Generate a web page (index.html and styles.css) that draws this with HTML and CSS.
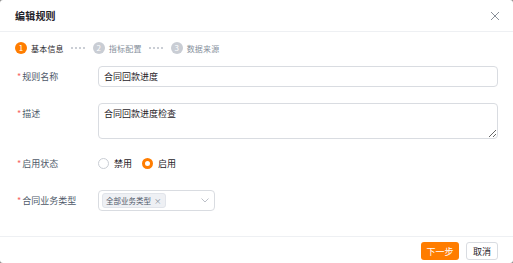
FILE: index.html
```html
<!DOCTYPE html>
<html lang="zh">
<head>
    <meta charset="UTF-8">
    <title>编辑规则</title>
    <link rel="stylesheet" href="styles.css">
</head>
<body>

<div class="dialog">
    <div class="dialog-header">
        <span class="dialog-title">编辑规则</span>
        <svg class="close-icon" width="10" height="10" viewBox="0 0 10 10">
            <path d="M1 1 L9 9 M9 1 L1 9" stroke="#8a9099" stroke-width="1" fill="none"/>
        </svg>
    </div>

    <div class="steps">
        <div class="step active"><span class="step-num">1</span><span class="step-text">基本信息</span></div>
        <span class="step-dots"></span>
        <div class="step"><span class="step-num">2</span><span class="step-text">指标配置</span></div>
        <span class="step-dots"></span>
        <div class="step"><span class="step-num">3</span><span class="step-text">数据来源</span></div>
    </div>

    <div class="form">
        <div class="form-row">
            <label class="form-label"><i>*</i>规则名称</label>
            <div class="form-control">
                <input type="text" class="text-input" value="合同回款进度">
            </div>
        </div>
        <div class="form-row tight">
            <label class="form-label"><i>*</i>描述</label>
            <div class="form-control">
                <textarea class="text-area">合同回款进度检查</textarea>
            </div>
        </div>
        <div class="form-row">
            <label class="form-label"><i>*</i>启用状态</label>
            <div class="form-control radios">
                <span class="radio"><span class="radio-dot"></span>禁用</span>
                <span class="radio checked"><span class="radio-dot"></span>启用</span>
            </div>
        </div>
        <div class="form-row">
            <label class="form-label"><i>*</i>合同业务类型</label>
            <div class="form-control">
                <div class="select-box">
                    <span class="tag">全部业务类型<span class="tag-close">×</span></span>
                    <svg class="chevron" width="8" height="5" viewBox="0 0 8 5">
                        <path d="M0.5 0.5 L4 4 L7.5 0.5" stroke="#b4b9c2" stroke-width="0.9" fill="none"/>
                    </svg>
                </div>
            </div>
        </div>
    </div>

    <div class="dialog-footer">
        <button class="btn btn-primary">下一步</button>
        <button class="btn">取消</button>
    </div>
</div>

</body>
</html>
```

FILE: styles.css
```css
* {
    box-sizing: border-box;
    margin: 0;
    padding: 0;
    font-family: "Noto Sans CJK SC", "Noto Sans", sans-serif;
}

body {
    background: #8c8c8c;
    width: 513px;
    height: 263px;
    overflow: hidden;
}

.dialog {
    background: #fff;
    width: 513px;
    height: 263px;
    border-radius: 3px;
    display: flex;
    flex-direction: column;
}

.dialog-header {
    height: 32px;
    padding: 0 13px 0 15px;
    display: flex;
    align-items: center;
    justify-content: space-between;
    border-bottom: 1px solid #eef0f3;
}

.dialog-title {
    font-size: 10px;
    font-weight: 600;
    color: #1f2329;
    letter-spacing: 0.2px;
}

.close-icon {
    display: block;
}

.steps {
    display: flex;
    align-items: center;
    padding: 9px 15px 0;
    height: 23px;
}

.step {
    display: flex;
    align-items: center;
}

.step-num {
    width: 12px;
    height: 12px;
    border-radius: 50%;
    background: #c9cdd4;
    color: #fff;
    font-size: 8px;
    line-height: 12px;
    text-align: center;
    margin-right: 4px;
}

.step-text {
    font-size: 8px;
    color: #86909c;
    letter-spacing: 0.2px;
}

.step.active .step-num {
    background: #ff7d00;
}

.step.active .step-text {
    color: #1f2329;
}

.step-dots {
    width: 17px;
    height: 2px;
    margin: 0 6px 0 6px;
    background-image: radial-gradient(circle, #c9cdd4 0.7px, transparent 1px);
    background-size: 4px 2px;
}

.form {
    flex: 1;
    padding: 11px 15px 0 17px;
}

.form-row {
    display: flex;
    margin-bottom: 16px;
}

.form-row.tight {
    margin-bottom: 14px;
}

.form-label {
    width: 81px;
    line-height: 21px;
    font-size: 9px;
    color: #4e5969;
}

.form-label i {
    font-style: normal;
    color: #f76560;
    margin-right: 1px;
}

.form-control {
    flex: 1;
}

.text-input, .text-area {
    display: block;
    width: 100%;
    height: 21px;
    border: 1px solid #d9dce1;
    border-radius: 4px;
    padding: 0 5px;
    font-size: 9px;
    color: #1f2329;
    outline: none;
}

.text-area {
    height: 36px;
    padding: 3px 5px;
    line-height: 13px;
    resize: vertical;
}

.radios {
    display: flex;
    align-items: center;
    height: 21px;
    font-size: 9px;
    color: #1f2329;
}

.radio {
    display: flex;
    align-items: center;
    margin-right: 10px;
}

.radio-dot {
    width: 11px;
    height: 11px;
    border: 1px solid #c9cdd4;
    border-radius: 50%;
    margin-right: 5px;
}

.radio.checked .radio-dot {
    border: 3px solid #ff7d00;
}

.select-box {
    width: 117px;
    height: 21px;
    border: 1px solid #d9dce1;
    border-radius: 4px;
    display: flex;
    align-items: center;
    padding: 0 4px 0 3px;
}

.tag {
    height: 15px;
    line-height: 13px;
    padding: 0 3px;
    background: #eef0f4;
    border: 1px solid #e1e4ea;
    border-radius: 3px;
    font-size: 7.5px;
    color: #4e5969;
}

.tag-close {
    margin-left: 3px;
    color: #86909c;
}

.chevron {
    margin-left: auto;
    margin-right: 1px;
}

.dialog-footer {
    height: 27px;
    border-top: 1px solid #eef0f3;
    display: flex;
    justify-content: flex-end;
    align-items: flex-start;
    padding: 5px 15px 0 0;
    gap: 7px;
}

.btn {
    height: 18px;
    padding: 0 6px;
    font-size: 9px;
    white-space: nowrap;
    border-radius: 3px;
    border: 1px solid #d9dce1;
    background: #fff;
    color: #1f2329;
}

.btn-primary {
    padding: 0 5.5px;
    background: #ff7d00;
    border: none;
    color: #fff;
}
```
